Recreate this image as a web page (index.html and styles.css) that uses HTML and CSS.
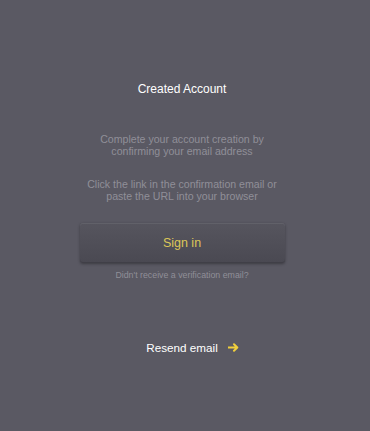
FILE: index.html
```html
<!DOCTYPE html>
<html>
<head>
<meta charset="utf-8">
<link rel="stylesheet" href="styles.css">
</head>
<body>
<main class="page">
  <h1 class="title">Created Account</h1>
  <p class="note note-first">Complete your account creation by<br>confirming your email address</p>
  <p class="note">Click the link in the confirmation email or<br>paste the URL into your browser</p>
  <button class="signin">Sign in</button>
  <p class="hint">Didn't receive a verification email?</p>
  <a class="resend" href="#">Resend email<svg class="arrow" width="11" height="9" viewBox="0 0 11 9"><path d="M0.5 4.5H9M6 1.3L9.3 4.5L6 7.7" fill="none" stroke="#f0cf3c" stroke-width="2" stroke-linecap="round" stroke-linejoin="round"/></svg></a>
</main>
</body>
</html>
```

FILE: styles.css
```css
html, body {
  margin: 0;
  padding: 0;
  background: #5a5963;
  height: 100%;
}
body {
  font-family: "Liberation Sans", Arial, sans-serif;
}
.page {
  width: 364px;
  display: flex;
  flex-direction: column;
  align-items: center;
  padding-top: 82px;
}
.title {
  margin: 0;
  font-size: 12px;
  font-weight: normal;
  color: #ffffff;
  line-height: 15px;
}
.note {
  margin: 0;
  font-size: 10.6px;
  line-height: 12px;
  color: #908f98;
  text-align: center;
}
.note-first {
  margin-top: 36px;
}
.note + .note {
  margin-top: 21px;
}
.signin {
  margin-top: 21px;
  width: 205px;
  height: 40px;
  border: none;
  border-radius: 3px;
  background: linear-gradient(#56555e, #4a4952);
  box-shadow: 0 1px 0 rgba(255,255,255,0.07) inset, 0 -1px 0 #403f47 inset, 0 1px 3px rgba(0,0,0,0.35);
  color: #dcc658;
  font-family: inherit;
  font-size: 12.5px;
  cursor: pointer;
}
.hint {
  margin: 7px 0 0;
  font-size: 8.8px;
  line-height: 11px;
  color: #908f98;
}
.resend {
  position: relative;
  margin-top: 59px;
  font-size: 11.7px;
  line-height: 15px;
  color: #ffffff;
  text-decoration: none;
}
.arrow {
  position: absolute;
  left: calc(100% + 10px);
  top: 3px;
}
```
